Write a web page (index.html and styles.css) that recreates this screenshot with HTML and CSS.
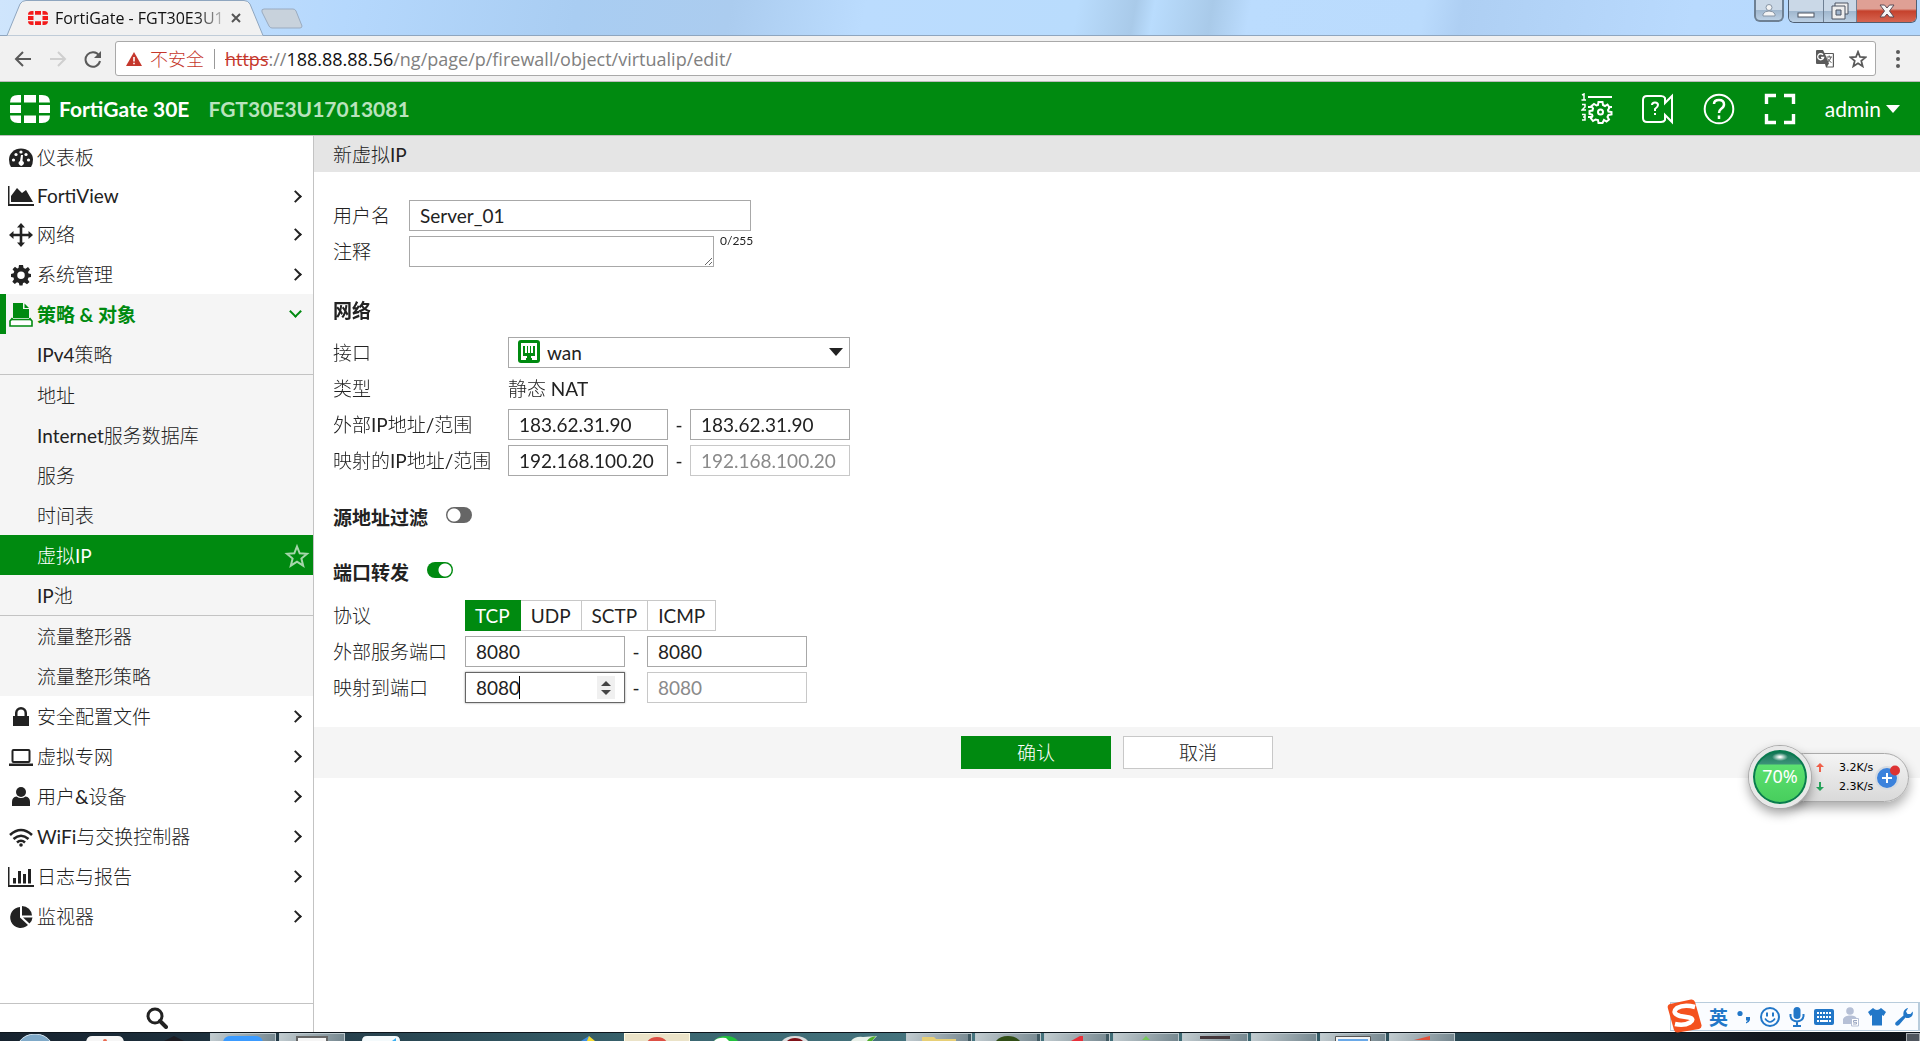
FILE: index.html
```html
<!DOCTYPE html>
<html lang="zh-CN">
<head>
<meta charset="utf-8">
<title>FortiGate - FGT30E3U17013081</title>
<link rel="stylesheet" href="styles.css">
</head>
<body>
<div class="screen">

<div class="tabstrip">
  <div class="tab">
    <svg class="tab-shape" width="266" height="36" viewBox="0 0 266 36"><path d="M0 35.5H7L20 4Q22 .5 26 .5H244Q248 .5 250 4L263 35.5" fill="#f1f1f1" stroke="#8fa6bf"/></svg>
    <svg class="favicon" width="20" height="14" viewBox="0 0 40 34" preserveAspectRatio="none"><use href="#forti"/></svg>
    <span class="tab-title">FortiGate - FGT30E3U1</span>
    <button class="tab-close" aria-label="关闭标签页"><svg width="10" height="10" viewBox="0 0 10 10"><path d="M1 1l8 8M9 1l-8 8" stroke="#555" stroke-width="2"/></svg></button>
  </div>
  <button class="new-tab" aria-label="新标签页"><svg width="44" height="22" viewBox="0 0 44 22"><path d="M4 1H33Q35 1 36 3L42 18Q42 20 40 20H12Q10 20 9 18L2 4Q1 1 4 1Z" fill="#c8d2dc" stroke="#9aabc0"/></svg></button>
  <div class="window-buttons">
    <button class="wb user" aria-label="用户"><svg width="16" height="14" viewBox="0 0 16 14"><circle cx="8" cy="4.500" r="3" fill="#f4f4f4" stroke="#8795a5"/><path d="M2 13V11Q4 8 8 8T14 11V13Z" fill="#f4f4f4" stroke="#8795a5"/></svg></button>
    <div class="wb-group">
      <button class="wb min" aria-label="最小化"><svg width="18" height="16" viewBox="0 0 18 16"><rect x="1" y="10" width="16" height="4" fill="#fff" stroke="#4d5563"/></svg></button>
      <button class="wb max" aria-label="还原"><svg width="20" height="18" viewBox="0 0 20 18"><path d="M5 1h13v11H5z" fill="#eee" stroke="#4d5563"/><path d="M2 4h13v13H2z" fill="#eee" stroke="#4d5563"/><path d="M6 8h5v5H6z" fill="#9fb4cc" stroke="#4d5563"/></svg></button>
      <button class="wb close" aria-label="关闭"><svg width="16" height="14" viewBox="0 0 16 14"><path d="M1 1H5.500L8 4 10.500 1H15L10.500 7 15 13H10.500L8 10 5.500 13H1L5.500 7Z" fill="#f5f5f5" stroke="#5b4a55"/></svg></button>
    </div>
  </div>
</div>

<div class="toolbar">
  <button class="tool back" aria-label="后退"><svg width="18" height="16" viewBox="0 0 18 16"><path d="M9 1L2 8l7 7M2 8h15" fill="none" stroke="#5a5a5a" stroke-width="2"/></svg></button>
  <button class="tool forward" aria-label="前进"><svg width="18" height="16" viewBox="0 0 18 16"><path d="M9 1l7 7-7 7M16 8H1" fill="none" stroke="#cfcfcf" stroke-width="2"/></svg></button>
  <button class="tool reload" aria-label="重新加载"><svg width="18" height="18" viewBox="0 0 18 18"><path d="M15 5.500A7.300 7.300 0 1 0 16 11" fill="none" stroke="#5a5a5a" stroke-width="2"/><path d="M17 1V8H10Z" fill="#5a5a5a"/></svg></button>
  <div class="omnibox">
    <svg width="16" height="14" viewBox="0 0 16 14"><path d="M8 0L16 14H0Z" fill="#c5372c"/><path d="M7.200 5h1.600v4.500H7.200zM7.200 10.700h1.600v1.600H7.200z" fill="#fff"/></svg>
    <span class="insecure">不安全</span>
    <div class="url" role="textbox" aria-label="地址"><s>https</s>://<b>188.88.88.56</b>/ng/page/p/firewall/object/virtualip/edit/</div>
    <button class="omni-btn" aria-label="翻译"><svg width="18" height="18" viewBox="0 0 18 18"><path d="M1 0H7L8.500 3H17Q18 3 18 4V16.500Q18 17.500 17 17.500H10L9 14H1Q0 14 0 13V1Q0 0 1 0Z" fill="#5a5a5a"/><path d="M9 4H16.800V16.500H11L13 13.500Z" fill="#fff"/><path d="M10.500 7H16M13.200 5.500V7M11 12.500Q14 11 15 7M11.500 8.500Q13 11.500 15.500 12.500" stroke="#5a5a5a" fill="none"/><path d="M7 4.800A3 3 0 1 0 7.600 7.500H5" stroke="#fff" stroke-width="1.300" fill="none"/></svg></button>
    <button class="omni-btn" aria-label="收藏"><svg width="18" height="18" viewBox="0 0 24 24"><path d="M12 2.500l2.700 6.800 7.300.5-5.600 4.700 1.800 7.200L12 17.700l-6.200 4 1.800-7.200L2 9.800l7.300-.5z" fill="none" stroke="#5a5a5a" stroke-width="2.400"/></svg></button>
  </div>
  <button class="tool more" aria-label="菜单"><svg width="4" height="18" viewBox="0 0 4 18"><circle cx="2" cy="2" r="2" fill="#5a5a5a"/><circle cx="2" cy="9" r="2" fill="#5a5a5a"/><circle cx="2" cy="16" r="2" fill="#5a5a5a"/></svg></button>
</div>

<header class="appbar">
  <svg class="logo" width="40" height="28" viewBox="0 0 40 34" preserveAspectRatio="none"><g id="forti"><path d="M11 0V9H0Q0 0 8 0ZM14 0H26V9H14ZM29 0H32Q40 0 40 9H29ZM0 12H11V22H0ZM29 12H40V22H29ZM0 25H11V34H8Q0 34 0 25ZM14 25H26V34H14ZM29 25H40Q40 34 32 34H29Z"/></g></svg>
  <span class="product">FortiGate 30E</span>
  <span class="host">FGT30E3U17013081</span>
  <div class="app-actions">
    <button aria-label="任务"><svg width="32" height="32" viewBox="0 0 32 32"><g fill="none" stroke="#fff" stroke-width="2"><path d="M7 4H31M7 14H11M7 24H11M27 14H31"/><path d="M1 2L3 1V7M.5 7H5M1 11.500H4V14L1 17H5M1 21.500H4V27H1M2 24H4" stroke-width="1.500"/><circle cx="19.500" cy="19" r="2.500"/><path d="M17.500 9H21.500L22 12 24 13 26.500 11.500 28.500 14.500 27 17 27.500 18.500 30.500 19V21.500L27.500 22 26.500 24 28 26.500 25.500 28.500 23 27 21.500 30H17.500L17 27 14.500 26.500 12 28 10 25.500 11.500 23 11 21.500 8.500 21V18L11.500 17.500 12 15.500 10.500 13 13 11 15.500 12.500 17 12Z"/></g></svg></button>
    <button aria-label="视频帮助"><svg width="32" height="32" viewBox="0 0 32 32"><path d="M5 3H19Q22 3 23 5V10L30 3V29L23 22V27Q22 29 19 29H5Q1 29 1 25V7Q1 3 5 3Z" fill="none" stroke="#fff" stroke-width="2"/><path d="M10 12Q10 9.500 13 9.500T16 12Q16 14 13 16V18M13 20V22" fill="none" stroke="#fff" stroke-width="2"/></svg></button>
    <button aria-label="帮助"><svg width="32" height="32" viewBox="0 0 32 32"><circle cx="16" cy="16" r="14.300" fill="none" stroke="#fff" stroke-width="2"/><path d="M11 11Q11 7 16 7T21 11.500Q21 14 18 16 16 17.500 16 20M16 22.500V26" fill="none" stroke="#fff" stroke-width="2.500"/></svg></button>
    <button aria-label="全屏"><svg width="32" height="32" viewBox="0 0 32 32"><path d="M2.500 11V2.500H12M20 2.500H29.500V11M29.500 21V29.500H20M12 29.500H2.500V21" fill="none" stroke="#fff" stroke-width="3.400"/></svg></button>
    <button class="account">admin<svg width="14" height="8" viewBox="0 0 14 8"><path d="M0 0H14L7 8Z" fill="#fff"/></svg></button>
  </div>
</header>

<div class="body">
  <nav class="sidebar">
    <div class="menu">
      <a href="#"><svg viewBox="0 0 24 24"><path d="M2 21Q0 18 0 13.500A12 11 0 0 1 24 13.500Q24 18 22 21Z"/><g fill="#fff"><circle cx="4.500" cy="14" r="1.600"/><circle cx="7" cy="8.500" r="1.600"/><circle cx="12" cy="6" r="1.600"/><circle cx="17" cy="8.500" r="1.600"/><circle cx="19.500" cy="14" r="1.600"/><path d="M12 9H14L13.500 15A2.500 2.500 0 1 1 11 15Z"/></g></svg>仪表板</a>
      <a href="#" class="latin"><svg viewBox="0 0 24 24"><path d="M-1 2H.5V20H25V22H-1ZM2 18V12L8 4 13 9 17 6 24 18Z"/></svg>FortiView<i class="chev"></i></a>
      <a href="#"><svg viewBox="0 0 24 24"><path d="M12 0L16 4.500H13.300V10.700H19.500V8L24 12 19.500 16V13.300H13.300V19.500H16L12 24 8 19.500H10.700V13.300H4.500V16L0 12 4.500 8V10.700H10.700V4.500H8Z"/></svg>网络<i class="chev"></i></a>
      <a href="#"><svg viewBox="0 0 24 24"><path fill-rule="evenodd" d="M10 2H14L14.600 5 16.500 5.800 19 4 21 6.500 19 9 19.500 10.500 22 11V14L19.500 14.600 18.700 16.500 20.500 19 18 21.200 15.500 19.500 14 20 13.500 22.500H10.500L9.800 20 8 19.300 5.800 21 3.300 18.700 5 16.300 4.500 14.500 2 14V11L4.600 10.300 5.300 8.500 3.500 6.200 6 3.800 8.200 5.500 9.500 5ZM12 8.500A3.700 3.700 0 1 0 12 16 3.700 3.700 0 1 0 12 8.500Z"/></svg>系统管理<i class="chev"></i></a>
      <div class="group">
        <a href="#" class="open"><svg viewBox="0 0 24 24"><path d="M4 0H14V6H20V15H4Z"/><path d="M15.500 .5L20 5H15.500Z"/><path d="M3.500 15L1 18V23H23V18L20.500 15" fill="#fff" stroke="#008a10" stroke-width="1.600"/><path d="M2 16.500H22" stroke="#008a10" stroke-width="1.600"/></svg>策略 &amp; 对象<i class="chev down"></i></a>
        <a href="#" class="sub">IPv4策略</a>
        <a href="#" class="sub rule">地址</a>
        <a href="#" class="sub">Internet服务数据库</a>
        <a href="#" class="sub">服务</a>
        <a href="#" class="sub">时间表</a>
        <a href="#" class="sub current">虚拟IP<svg class="star" viewBox="0 0 24 24"><path d="M12 2.500l2.700 6.800 7.300.5-5.600 4.700 1.800 7.200L12 17.700l-6.200 4 1.800-7.200L2 9.800l7.300-.5z" fill="none" stroke="#a6d6ab" stroke-width="2"/></svg></a>
        <a href="#" class="sub">IP池</a>
        <a href="#" class="sub rule">流量整形器</a>
        <a href="#" class="sub">流量整形策略</a>
      </div>
      <a href="#"><svg viewBox="0 0 24 24"><path fill-rule="evenodd" d="M4 11H6V8A6 6 0 0 1 18 8V11H20V21H4ZM8.500 11H15.500V8A3.500 3.500 0 0 0 8.500 8Z"/></svg>安全配置文件<i class="chev"></i></a>
      <a href="#"><svg viewBox="0 0 24 24"><rect x="3.500" y="5" width="17" height="12" rx="1" fill="none" stroke="#222" stroke-width="2"/><path d="M0 18.500H24V21H0Z"/></svg>虚拟专网<i class="chev"></i></a>
      <a href="#"><svg viewBox="0 0 24 24"><circle cx="12" cy="7" r="5"/><path d="M3 21V17Q3 12 7.500 11.500 12 14.500 16.500 11.500 21 12 21 17V21Z"/></svg>用户&amp;设备<i class="chev"></i></a>
      <a href="#"><svg viewBox="0 0 24 24"><g fill="none" stroke="#222" stroke-width="2.600"><path d="M1 10Q12 0 23 10M4.500 14Q12 7.500 19.500 14M8 17.500Q12 14 16 17.500"/></g><circle cx="12" cy="20" r="1.800"/></svg>WiFi与交换控制器<i class="chev"></i></a>
      <a href="#"><svg viewBox="0 0 24 24"><path d="M-1 2H.5V20H25V22H-1ZM4 13H7V18.500H4ZM9 6H12V18.500H9ZM14 9H17V18.500H14ZM19 4H22V18.500H19Z"/></svg>日志与报告<i class="chev"></i></a>
      <a href="#"><svg viewBox="0 0 24 24"><path d="M11 2A10.500 10.500 0 1 0 19 20L11 12.500Z"/><path d="M13 1A10 10 0 0 1 23 10.500H13Z"/><path d="M14 12.500H23.500Q23 16.500 20.500 18.500Z"/></svg>监视器<i class="chev"></i></a>
    </div>
    <button class="search" aria-label="搜索"><svg width="22" height="22" viewBox="0 0 22 22"><circle cx="9" cy="9" r="7" fill="none" stroke="#222" stroke-width="3"/><path d="M14 14l6 6" stroke="#222" stroke-width="4" stroke-linecap="round"/></svg></button>
  </nav>

  <main class="main">
    <h1>新虚拟IP</h1>
    <form>
      <section class="basic">
        <div class="row"><label for="name">用户名</label><input id="name" class="wide" value="Server_01"></div>
        <div class="row"><label for="note">注释</label><textarea id="note"></textarea><span class="count">0/255</span></div>
      </section>

      <section class="network">
        <h2>网络</h2>
        <div class="row"><label for="iface">接口</label>
          <div class="select"><svg class="port" width="22" height="23" viewBox="0 0 22 23"><rect width="22" height="23" rx="3" fill="#008a10"/><path d="M3 3H19V20H14V18H8V20H3Z" fill="#fff"/><path d="M5 6H7V13H9V6H10V13H12V6H13V13H15V6H17V16H13V20H9V16H5Z" fill="#008a10"/></svg>
          <select id="iface"><option>wan</option></select><svg class="arrow" width="14" height="8" viewBox="0 0 14 8"><path d="M0 0H14L7 8Z" fill="#222"/></svg></div></div>
        <div class="row"><span class="label">类型</span><span class="value">静态 NAT</span></div>
        <div class="row"><label for="ext1">外部IP地址/范围</label><input id="ext1" value="183.62.31.90"><span class="dash">-</span><input value="183.62.31.90" aria-label="外部IP结束"></div>
        <div class="row"><label for="map1">映射的IP地址/范围</label><input id="map1" value="192.168.100.20"><span class="dash">-</span><input value="192.168.100.20" aria-label="映射IP结束" disabled></div>
      </section>

      <section class="switch-row">
        <h2><label for="filter">源地址过滤</label></h2><input id="filter" type="checkbox" class="toggle">
      </section>

      <section class="ports">
        <div class="switch-row"><h2><label for="forward">端口转发</label></h2><input id="forward" type="checkbox" class="toggle" checked></div>
        <div class="row"><span class="label">协议</span>
          <div class="segments"><button type="button" class="on">TCP</button><button type="button">UDP</button><button type="button">SCTP</button><button type="button">ICMP</button></div></div>
        <div class="row"><label for="sp1">外部服务端口</label><input id="sp1" value="8080"><span class="dash">-</span><input value="8080" aria-label="外部端口结束"></div>
        <div class="row"><label for="mp1">映射到端口</label><div class="spin"><input id="mp1" class="focused" value="8080"><i class="caret"></i><span class="steps"><button type="button" aria-label="增加"><svg width="10" height="5" viewBox="0 0 10 5"><path d="M0 5L5 0l5 5z" fill="#444"/></svg></button><button type="button" aria-label="减少"><svg width="10" height="5" viewBox="0 0 10 5"><path d="M0 0h10L5 5z" fill="#444"/></svg></button></span></div><span class="dash">-</span><input value="8080" aria-label="映射端口结束" disabled></div>
      </section>

      <div class="footer"><button type="button" class="ok">确认</button><button type="button" class="cancel">取消</button></div>
    </form>
  </main>
</div>

<div class="taskbar">
  <div class="task start"><svg width="36" height="8" viewBox="0 0 36 8"><path d="M2 8Q8 0 18 0T34 8Z" fill="#7fa9c8" stroke="#d8e8f2"/></svg></div>
  <div class="task"><svg width="38" height="6" viewBox="0 0 38 6"><path d="M0 6Q1 0 6 0H32Q37 0 38 6Z" fill="#f6f6f6"/><circle cx="19" cy="5" r="2" fill="#e9684f"/></svg></div>
  <div class="task"><svg width="24" height="6" viewBox="0 0 24 6"><path d="M0 6L12 0 24 6Z" fill="#1c1c22"/></svg></div>
  <div class="task on"><svg width="40" height="6" viewBox="0 0 40 6"><path d="M0 6Q1 0 8 0H32Q39 0 40 6Z" fill="#3b9bff"/></svg></div>
  <div class="task on"><svg width="32" height="5" viewBox="0 0 32 5"><path d="M0 0H32V5H0Z" fill="#666"/><path d="M2 2H30V5H2Z" fill="#f5f5f5"/></svg></div>
  <div class="task"><svg width="38" height="5" viewBox="0 0 38 5"><path d="M0 5Q0 0 5 0H33Q38 0 38 5Z" fill="#f4fafc"/><path d="M30 5L34 2V5Z" fill="#3bb0f0"/></svg></div>
  <div class="task"></div>
  <div class="task"></div>
  <div class="task"><svg width="14" height="5" viewBox="0 0 14 5"><path d="M0 5L8 0V5Z" fill="#3f8fe0"/><path d="M6 5L8 0 14 5Z" fill="#f5dc32"/></svg></div>
  <div class="task active"><svg width="20" height="5" viewBox="0 0 20 5"><path d="M0 5Q3 0 10 0T20 5Z" fill="#dd5044"/></svg></div>
  <div class="task"><svg width="24" height="5" viewBox="0 0 24 5"><path d="M0 5Q4 0 12 0T24 5Z" fill="#22c13d"/><path d="M0 5Q4 1 12 2L15 5Z" fill="#fff"/></svg></div>
  <div class="task"><svg width="26" height="5" viewBox="0 0 26 5"><path d="M0 5Q4 0 13 0T26 5Z" fill="#ddd"/><path d="M5 5Q8 2 13 2T21 5Z" fill="#801218"/></svg></div>
  <div class="task"><svg width="26" height="5" viewBox="0 0 26 5"><path d="M0 5Q4 0 12 1L26 0 21 5Z" fill="#e8f0e8"/><path d="M16 5Q18 1 25 0L21 5Z" fill="#4fae2b"/></svg></div>
  <div class="task on stack gap"><svg width="34" height="5" viewBox="0 0 34 5"><path d="M0 1H12L14 3H34V5H0Z" fill="#e7cf76"/></svg></div>
  <div class="task on stack"><svg width="24" height="5" viewBox="0 0 24 5"><path d="M0 5Q4 0 12 0T24 5Z" fill="#314e17"/></svg></div>
  <div class="task on stack"><svg width="12" height="5" viewBox="0 0 12 5"><path d="M0 5L9 0H12V5Z" fill="#e8303a"/></svg></div>
  <div class="task on"><svg width="8" height="4" viewBox="0 0 8 4"><path d="M0 4L4 0 8 4Z" fill="#76c85a"/></svg></div>
  <div class="task on"><svg width="30" height="3" viewBox="0 0 30 3"><path d="M0 0H30V3H0Z" fill="#43363a"/></svg></div>
  <div class="task on"></div>
  <div class="task on"><svg width="36" height="6" viewBox="0 0 36 6"><path d="M.5 6V.5H35.500V6" fill="#f4f4f4" stroke="#555"/><path d="M3 3H33V6H3Z" fill="#6aa9e8"/></svg></div>
  <div class="task on"><svg width="16" height="4" viewBox="0 0 16 4"><path d="M0 4L16 0V4Z" fill="#e0503a"/></svg></div>
  <div class="desktop-peek"></div>
</div>

<div class="netball">
  <div class="pill">
    <div class="rates"><svg width="8" height="9" viewBox="0 0 8 9"><path d="M4 0L8 4H5V9H3V4H0Z" fill="#f0604a"/></svg><span>3.2K/s</span><svg width="8" height="9" viewBox="0 0 8 9"><path d="M4 9L8 5H5V0H3V5H0Z" fill="#28a45c"/></svg><span>2.3K/s</span></div>
    <svg class="plus" width="26" height="26" viewBox="0 0 26 26"><circle cx="12" cy="14" r="11" fill="#3b82dc" stroke="#d5dbe2" stroke-width="2"/><path d="M12 9V19M7 14H17" stroke="#fff" stroke-width="2"/><circle cx="20" cy="6.500" r="5" fill="#dd3333"/></svg>
  </div>
  <div class="ball">70%</div>
</div>

<div class="ime">
  <svg class="sogou" width="36" height="34" viewBox="0 0 36 34"><path d="M3 5L24 .5Q27 0 28 3L34.500 26Q35 29 32 30L11 33.500Q8 34 7 31L.8 9Q0 6 3 5Z" fill="#f4511e"/><path d="M28 8Q17 5 10 9 4 14 13 17L22 18.500Q28 20 23 23.500 17 27 8 25" fill="none" stroke="#fff" stroke-width="4.500"/></svg>
  <span class="lang">英</span>
  <svg width="14" height="14" viewBox="0 0 14 14"><circle cx="3" cy="3.500" r="2.600"/><path d="M9 7H13V10Q12 13 9 13.500V12Q10.500 11.500 10.500 10.500H9Z"/></svg>
  <svg width="20" height="20" viewBox="0 0 20 20"><circle cx="10" cy="10" r="9" fill="none" stroke="#2277c8" stroke-width="2"/><path d="M6 5.500h2v4H6zM12 5.500h2v4h-2z"/><path d="M5 11.500Q10 18.500 15 11.500" fill="none" stroke="#2277c8" stroke-width="1.600"/></svg>
  <svg width="16" height="20" viewBox="0 0 16 20"><rect x="4.500" width="7" height="12" rx="3.500"/><path d="M1.500 7V9Q2 14 8 14.500 14 14 14.500 9V7M8 14V19M4 19H12" fill="none" stroke="#2277c8" stroke-width="2"/></svg>
  <svg width="20" height="16" viewBox="0 0 20 16"><rect width="20" height="16" rx="2"/><path d="M3 4H17M3 8H17" stroke="#fff" stroke-width="2" stroke-dasharray="2 1"/><path d="M3 12H5M6 12H14M15 12H17" stroke="#fff" stroke-width="2"/></svg>
  <svg width="16" height="20" viewBox="0 0 16 20"><circle cx="7" cy="4" r="3.800" fill="#b6c0d6"/><path d="M0 17V12Q2 8 7 8.500 13 8 14 12V17Z" fill="#b6c0d6"/><path d="M8.500 11.500H15.500V19H8.500Z" fill="#fff" stroke="#b6c0d6"/><path d="M14 13.500H10.500V15.300H13.500V17H10" stroke="#9aa6c0" fill="none"/></svg>
  <svg width="18" height="18" viewBox="0 0 18 18"><path d="M5 0Q9 4 13 0L18 4 15.500 8 14 7V17.500H4V7L2.500 8 0 4Z"/></svg>
  <svg width="18" height="18" viewBox="0 0 18 18"><path d="M12.500 0L13 .3 11 3.500 12.500 6 15.500 6 17.700 3.500Q18.500 8 15 9.500 12 10.500 10.500 9.500L4 17Q2 18.500 .7 17 -.5 15.500 1 14L8.500 7.500Q7.500 2 12.500 0Z"/></svg>
</div>

</div>
</body>
</html>
```
FILE: styles.css
```css
*, *::before, *::after { box-sizing: border-box; }
body { margin: 0; color: #222; background: #fff; font: 400 19px/30px Lato, "Noto Sans CJK SC Light", "Noto Sans CJK SC", sans-serif; }
button, input, select, textarea { font: inherit; color: inherit; margin: 0; border-radius: 0; }
button { border: 0; padding: 0; background: none; display: flex; align-items: center; justify-content: center; }
svg { display: block; flex: none; }
a { color: inherit; text-decoration: none; }

.screen { position: relative; display: flex; flex-direction: column; height: 100vh; overflow: hidden; }

.tabstrip { display: flex; flex: none; height: 36px; border-bottom: 1px solid #8fa6bf;
  background: linear-gradient(100deg, #cfe5fc 0, #b5d8fd 18%, #a9cdf2 30%, #abccef 38%, #bbdcfe 45%, #b9dcfd 56%, #a9cae9 59%, #b9dcfd 60%, #a9cae9 63%, #bbdcfe 65%, #badbfd 74%, #aecff3 76%, #b9dafe 88%, #b4d8fd 100%); }
.tab { position: relative; display: flex; align-items: center; flex: none; width: 266px; height: 36px; padding: 0 24px 0 28px; gap: 7px; }
.tab-shape { position: absolute; left: 0; top: 0; }
.favicon, .tab-title, .tab-close { position: relative; }
.favicon { fill: #f31a1a; }
.tab-title { flex: 1; min-width: 0; white-space: nowrap; font: 400 16px/24px "Open Sans", sans-serif; color: #111;
  -webkit-mask-image: linear-gradient(90deg, #000 85%, #0004); mask-image: linear-gradient(90deg, #000 85%, #0004); }
.tab-close { width: 12px; height: 12px; margin-left: 2px; }
.new-tab { align-self: center; margin-left: -6px; padding-top: 2px; }
.window-buttons { display: flex; align-items: flex-start; margin-left: auto; gap: 4px; }
.wb-group { display: flex; border: 1px solid #4f5f72; border-top: 0; border-radius: 0 0 6px 6px; overflow: hidden; margin-right: 3px; }
.wb { height: 22px; background: linear-gradient(#cad8e7 50%, #9fb6cd 50%, #bcd0e4); border-right: 1px solid #6e7f93; }
.wb.user { width: 30px; border: 2px solid #6e8093; border-top: 0; border-radius: 0 0 6px 6px; }
.wb.min { width: 35px; }
.wb.max { width: 33px; }
.wb.close { width: 59px; border: 0; background: linear-gradient(#dfa095 40%, #c5412c 50%, #d66450); }

.toolbar { display: flex; align-items: center; flex: none; height: 46px; padding: 0 20px 0 14px; background: #f1f1f1; border-bottom: 1px solid #bbb; }
.tool { flex: none; width: 18px; margin-right: 17px; }
.tool.reload { margin-right: 13px; }
.omnibox { display: flex; align-items: center; flex: 1; height: 35px; padding: 0 8px 0 10px; background: #fff; border: 1px solid #a9a9a9; border-radius: 3px; font: 400 18px/30px "Open Sans", "Noto Sans CJK SC Light", "Noto Sans CJK SC", sans-serif; }
.insecure { margin: 0 10px 0 8px; color: #c5372c; }
.url { flex: 1; padding-left: 10px; line-height: 20px; border-left: 1px solid #999; color: #808080; }
.url s { color: #c5372c; }
.url b { color: #111; font-weight: 400; }
.omni-btn { margin-left: 15px; }
.tool.more { width: 4px; margin: 0 0 0 20px; }

.appbar { display: flex; align-items: center; flex: none; height: 54px; padding: 0 20px 0 10px; background: #008a10; border-bottom: 1px solid #bdbdbd; color: #fff; }
.logo { fill: #fff; }
.product, .host { font-size: 21px; font-weight: 700; margin-left: 9px; }
.host { margin-left: 19px; color: #b9e3bd; }
.app-actions { display: flex; align-items: center; gap: 29px; margin-left: auto; }
.account { gap: 5px; font-size: 21px; }

.body { display: flex; flex: 1; min-height: 0; }
.sidebar { display: flex; flex-direction: column; flex: none; width: 314px; border-right: 1px solid #c3c3c3; }
.menu { flex: 1; padding-top: 1px; overflow: hidden; }
.menu a { display: flex; align-items: center; height: 40px; padding: 1px 10px 0 9px; border: 0 solid #c3c3c3; }
.menu a.latin { height: 37px; }
.menu svg { width: 24px; height: 24px; margin-right: 4px; fill: #222; overflow: visible; }
.chev { width: 9px; height: 9px; margin: 0 3px 0 auto; border: solid #222; border-width: 2px 2px 0 0; transform: rotate(45deg); }
.group { background: #f5f5f5; }
.menu a.open { padding-left: 3px; border-left: 6px solid #008a10; color: #008a10; font-family: Lato, "Noto Sans CJK SC", sans-serif; font-weight: 700; }
.menu .open svg { fill: #008a10; }
.chev.down { border-color: #008a10; transform: rotate(135deg); margin: -6px 3px 0 auto; }
.menu a.sub { padding-left: 37px; }
.menu a.rule { height: 41px; border-top-width: 1px; }
.menu a.current { background: #008a10; color: #fff; padding-right: 4px; }
.menu .star { margin: 0 0 0 auto; fill: none; }
.search { flex: none; height: 29px; border-top: 1px solid #c3c3c3; }

.main { flex: 1; min-width: 0; }
h1 { margin: 0; padding: 4px 19px 2px; background: #e5e5e5; font-size: 19px; font-weight: 400; line-height: 30px; }
h2 { margin: 0; font: 700 19px/30px Lato, "Noto Sans CJK SC", sans-serif; }
form { padding-top: 28px; }
section { padding: 0 19px; }
.row { display: flex; align-items: center; height: 31px; margin-bottom: 5px; }
.row > label, .row > .label { flex: none; width: 76px; }
.network .row > label, .network .row > .label { width: 175px; }
.ports .row > label, .ports .row > .label { width: 132px; }
.row input, textarea, select { width: 160px; height: 31px; padding: 0 10px; background: #fff; border: 1px solid #a8a8a8; outline: 0; }
.row input.wide { width: 342px; }
.row input:disabled { border-color: #c8c8c8; color: #8a8a8a; }
textarea { width: 305px; resize: both; }
.count { align-self: flex-start; margin-left: 6px; font-size: 12px; line-height: 10px; }
.dash { width: 22px; text-align: center; }
.network { margin-top: 29px; }
.network h2 { margin-bottom: 11px; }
.select { position: relative; }
select { width: 342px; padding-left: 38px; appearance: none; }
.port { position: absolute; left: 10px; top: 3px; }
.arrow { position: absolute; right: 7px; top: 11px; }
.switch-row { display: flex; align-items: center; margin-top: 27px; }
.ports { margin-top: 25px; }
.ports .switch-row { margin: 0 0 12px; padding: 0; }
.toggle { appearance: none; width: 26px; height: 16px; margin: -7px 0 0 18px; border-radius: 8px; background: radial-gradient(circle at 8px 8px, #fff 6px, #666 7px); }
.toggle:checked { background: radial-gradient(circle at 18px 8px, #fff 6px, #008a10 7px); }
.segments { display: flex; }
.segments button { height: 31px; padding: 0 10px; border: 1px solid #c8c8c8; border-left: 0; }
.segments .on { background: #008a10; border-color: #008a10; color: #fff; }
.spin { position: relative; }
.row input.focused { display: block; border-color: #666; box-shadow: 0 0 2px #999; }
.caret { position: absolute; left: 54px; top: 4px; width: 1px; height: 23px; background: #000; }
.steps { position: absolute; right: 10px; top: 4px; width: 18px; height: 23px; display: flex; flex-direction: column; align-items: center; justify-content: center; gap: 4px; background: #f0f0f0; }
.footer { display: flex; justify-content: center; gap: 12px; margin-top: 24px; padding: 9px; background: #f5f5f5; }
.footer button { width: 150px; height: 33px; border: 1px solid #c8c8c8; background: #fff; }
.footer .ok { background: #008a10; border-color: #008a10; color: #fff; }

.taskbar { display: flex; flex: none; height: 9px; overflow: hidden; border-top: 1px solid #0c141b; background: linear-gradient(90deg, #16222e, #1f3340 12%, #3a6670 35%, #477680 50%, #3a6670 65%, #25404c 78%, #14181f 92%, #12161c); }
.task { display: flex; justify-content: center; flex: none; width: 66px; margin-right: 3px; padding-top: 3px; }
.task.start { width: 69px; padding-top: 1px; }
.task.on { border: 1px solid #bcc8cd; border-bottom: 0; background: linear-gradient(110deg, #c2ccd0, #75878f); padding-top: 2px; }
.task.active { border: 1px solid #fffbe4; border-bottom: 0; background: #ebe3c8; }
.task.stack { box-shadow: inset -3px 0 #415a63; }
.task.gap { margin-left: 6px; }
.desktop-peek { width: 14px; margin-left: auto; border: 1px solid #a8adb2; border-bottom: 0; background: #50565e; }

.netball { position: absolute; right: 11px; top: 746px; display: flex; align-items: center; width: 160px; height: 62px; }
.pill { display: flex; align-items: center; margin-left: 30px; width: 130px; height: 49px; padding: 0 8px 0 36px; border: 1px solid #aaa; border-radius: 25px; background: linear-gradient(#f4f4f4, #d9d9d9); box-shadow: 0 6px 12px #0005; }
.rates { display: grid; grid-template-columns: 8px 1fr; align-items: center; gap: 0 15px; width: 57px; margin-right: 2px; font: 11px/19px "DejaVu Sans", sans-serif; color: #000; }
.ball { position: absolute; left: 0; top: 0; width: 62px; height: 62px; border: 4px solid #e8e8e8; border-radius: 50%; box-shadow: 0 0 0 1px #aaa, 0 5px 12px #0006, inset 0 0 0 2px #0a7a50; background: radial-gradient(ellipse 8px 4px at 50% 7px, #fff 10%, transparent), linear-gradient(#0d7150 0, #3c9278 14px, #5ce070 15px, #46cd5c); color: #fff; text-align: center; font: 400 18px/52px "Noto Sans", sans-serif; }

.ime { position: absolute; right: 0; bottom: 10px; display: flex; align-items: center; gap: 9px; height: 29px; padding: 0 5px 0 38px; background: #fafcff; border: 1px solid #b8ccdc; border-right-width: 2px; fill: #2277c8; }
.sogou { position: absolute; left: -4px; top: -4px; }
.lang { color: #2277c8; font: 700 19px/24px "Noto Sans CJK SC", sans-serif; }
```
